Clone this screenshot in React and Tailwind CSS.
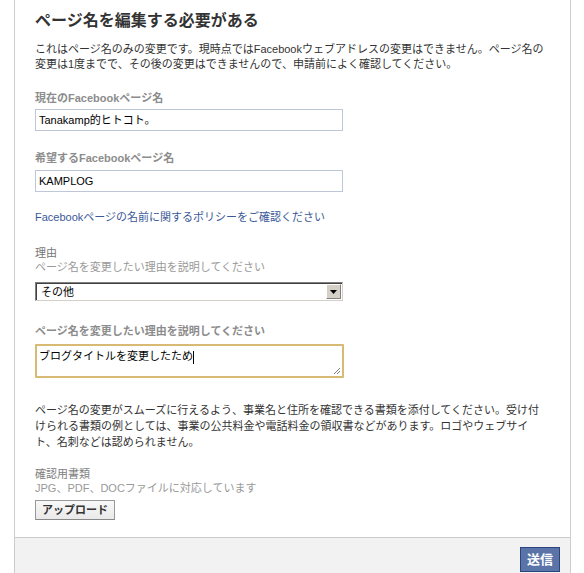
export default function App() {
  const font = 'font-["Liberation_Sans","Noto_Sans_CJK_JP",sans-serif]';
  return (
    <div className={`w-[584px] h-[573px] bg-white overflow-hidden ${font}`}>
      <div className="ml-[14px] w-[557px] h-[573px] border-x border-[#cccccc] flex flex-col">
        {/* form body */}
        <div className="flex-1 pl-[20px] pt-[11px] text-[11px] leading-[14px] text-[#333333]">
          <h1 className="text-[16px] leading-[20px] font-bold text-[#333333]">ページ名を編集する必要がある</h1>

          <p className="mt-[11px] leading-[15px] whitespace-nowrap">
            これはページ名のみの変更です。現時点ではFacebookウェブアドレスの変更はできません。ページ名の
            <br />
            変更は1度までで、その後の変更はできませんので、申請前によく確認してください。
          </p>

          <div className="mt-[19px] font-bold text-[#8c8c8c]">現在のFacebookページ名</div>
          <div className="mt-[4px] w-[308px] h-[22px] border border-[#bdc7d8] flex items-center px-[3px] text-[11px] text-[#000]">
            Tanakamp的ヒトコト。
          </div>

          <div className="mt-[20px] font-bold text-[#8c8c8c]">希望するFacebookページ名</div>
          <div className="mt-[5px] w-[308px] h-[22px] border border-[#bdc7d8] flex items-center px-[3px] text-[11px] text-[#000]">
            KAMPLOG
          </div>

          <div className="mt-[18px] text-[#3b5998]">Facebookページの名前に関するポリシーをご確認ください</div>

          <div className="mt-[22px] text-[#777777]">理由</div>
          <div className="text-[#999999]">ページ名を変更したい理由を説明してください</div>

          {/* select box */}
          <div className="mt-[8px] w-[308px] h-[19px] border border-t-[#808080] border-l-[#808080] border-b-[#d4d0c8] border-r-[#d4d0c8] flex">
            <div className="flex-1 flex items-center border-t border-l border-[#404040] bg-white pl-[4px] text-[11px] text-black">
              その他
            </div>
            <div className="w-[17px] border-t border-[#404040] bg-white flex items-stretch">
              <div className="w-[16px] m-[1px] mt-0 bg-[#d4d0c8] border border-t-white border-l-white border-b-[#808080] border-r-[#808080] flex items-center justify-center">
                <svg width="7" height="4" viewBox="0 0 7 4">
                  <path d="M0 0h7L3.5 4z" fill="#000" />
                </svg>
              </div>
            </div>
          </div>

          <div className="mt-[23px] font-bold text-[#8c8c8c]">ページ名を変更したい理由を説明してください</div>
          <div className="relative mt-[6px] w-[309px] h-[34px] border-2 border-[#d8ba74] rounded-[1px] bg-white px-[2px] pt-[3px] text-[11px] leading-[14px] text-black">
            <span>ブログタイトルを変更したため</span>
            <span className="inline-block w-px h-[13px] bg-black align-middle" />
            <svg className="absolute right-[1px] bottom-[1px]" width="8" height="8" viewBox="0 0 8 8">
              <path d="M7 1L1 7M7 4L4 7" stroke="#808080" strokeWidth="1" />
            </svg>
          </div>

          <p className="mt-[24px] leading-[16px] whitespace-nowrap">
            ページ名の変更がスムーズに行えるよう、事業名と住所を確認できる書類を添付してください。受け付
            <br />
            けられる書類の例としては、事業の公共料金や電話料金の領収書などがあります。ロゴやウェブサイ
            <br />
            ト、名刺などは認められません。
          </p>

          <div className="mt-[17px] text-[#808080]">確認用書類</div>
          <div className="text-[#999999]">JPG、PDF、DOCファイルに対応しています</div>
          <button className="mt-[5px] w-[80px] h-[20px] border border-[#999999] border-b-[#888888] bg-gradient-to-b from-[#f8f8f8] to-[#e9e9e9] text-[11px] font-bold text-[#333333] flex items-center justify-center">
            アップロード
          </button>
        </div>

        {/* footer */}
        <div className="h-[36px] border-t border-[#cccccc] bg-[#f2f2f2] flex justify-end items-start pt-[9px] pr-[10px]">
          <button className="w-[40px] h-[25px] bg-[#5b74a8] border border-[#29447e] text-white text-[13px] font-bold flex items-center justify-center">
            送信
          </button>
        </div>
      </div>
    </div>
  );
}
